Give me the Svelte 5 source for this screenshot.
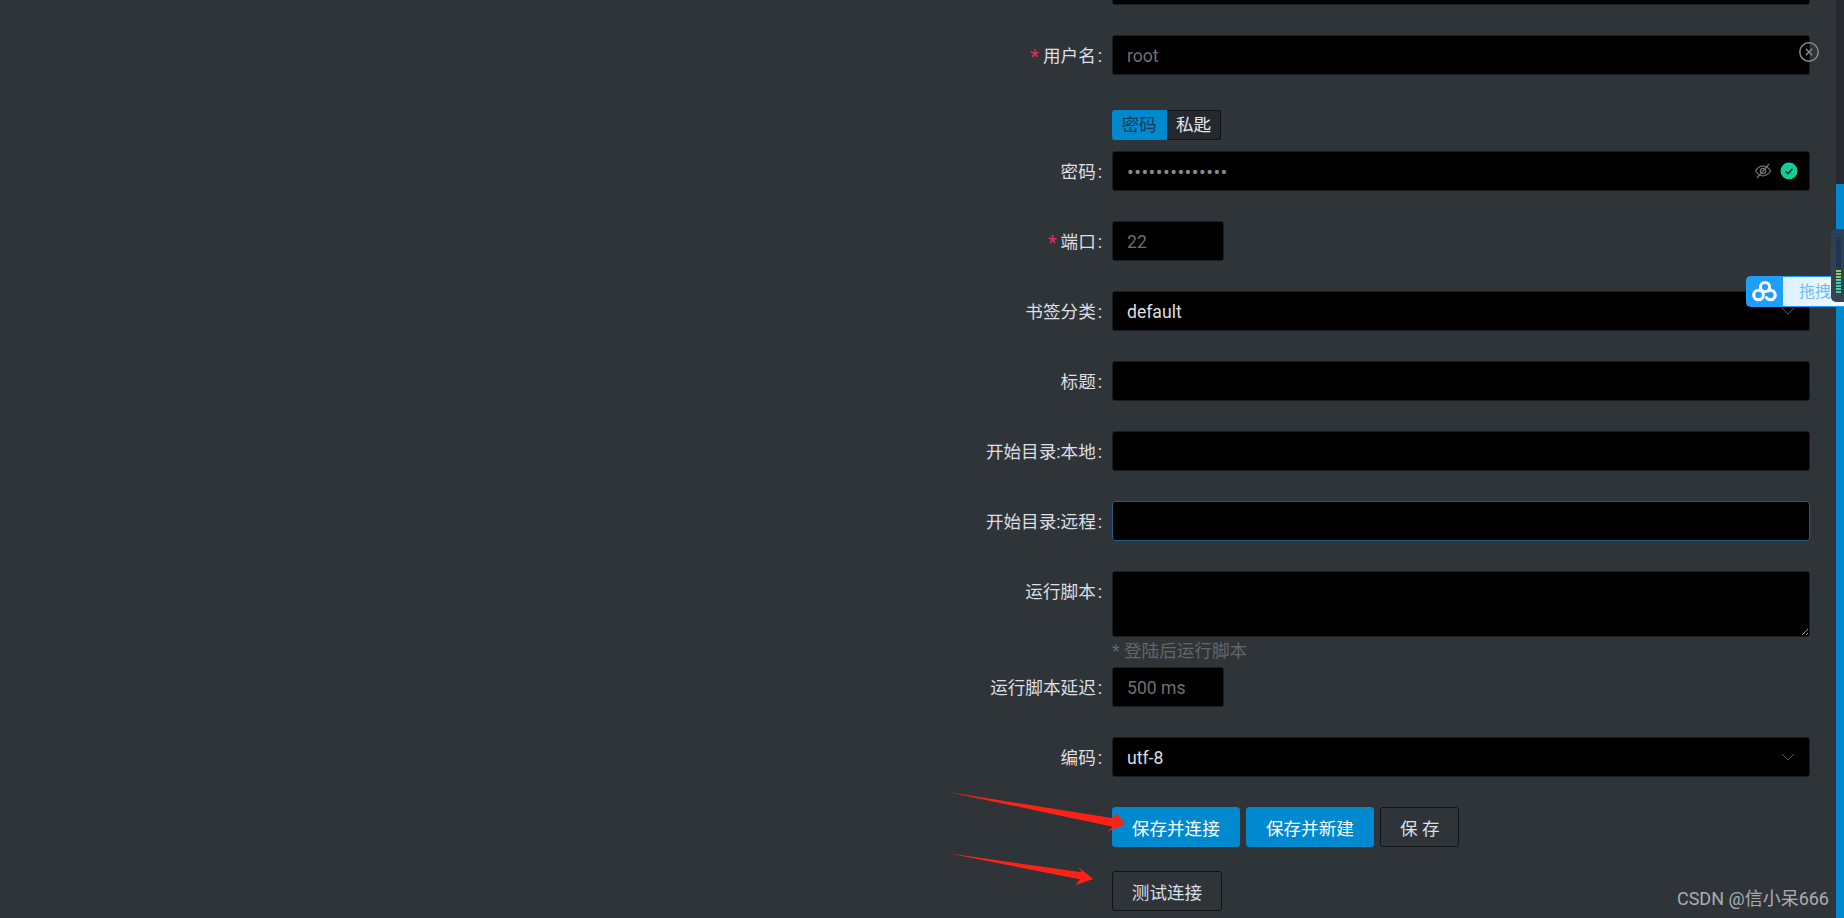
<script>
  let username = $state("");
  let title = $state("");
  let localDir = $state("");
  let remoteDir = $state("");
  let script = $state("");
  let authType = $state("password");
</script>

<div class="page">
  <main class="content">
    <form class="form">
      <div class="row">
        <span class="label"></span>
        <div class="field"><input class="input" /></div>
      </div>

      <div class="row">
        <span class="label"><i class="star">*</i>用户名<i class="colon">:</i></span>
        <div class="field">
          <input class="input" placeholder="root" bind:value={username} />
          <svg class="clear" width="22" height="22" viewBox="0 0 22 22" fill="none" stroke="#8a8a8a">
            <circle cx="11" cy="11" r="9.2" stroke-width="1.5" />
            <path d="M7.8 7.8l6.4 6.4M14.2 7.8l-6.4 6.4" stroke-width="1.5" />
          </svg>
        </div>
      </div>

      <div class="tabs">
        <button type="button" class="tab" class:on={authType === "password"} onclick={() => (authType = "password")}>密码</button>
        <button type="button" class="tab" class:on={authType === "key"} onclick={() => (authType = "key")}>私匙</button>
      </div>

      <div class="row">
        <span class="label">密码<i class="colon">:</i></span>
        <div class="field">
          <input class="input pass" type="password" value="12345678901234" />
          <div class="suffix">
            <svg width="18" height="16" viewBox="0 0 18 16" fill="none" stroke="#707070" stroke-width="1.3">
              <path d="M1.5 8C3.5 4.8 6 3.2 9 3.2s5.500 1.600 7.500 4.800C14.500 11.200 12 12.800 9 12.800S3.500 11.200 1.500 8z" />
              <circle cx="9" cy="8" r="2.600" />
              <path d="M3 15L15 1" />
            </svg>
            <svg width="18" height="18" viewBox="0 0 18 18">
              <circle cx="9" cy="9" r="8.500" fill="#13ce9c" />
              <path d="M5.500 9.200l2.500 2.500 4.500-5" fill="none" stroke="#08251d" stroke-width="1.600" />
            </svg>
          </div>
        </div>
      </div>

      <div class="row">
        <span class="label"><i class="star">*</i>端口<i class="colon">:</i></span>
        <div class="field short"><input class="input" placeholder="22" /></div>
      </div>

      <div class="row">
        <span class="label">书签分类<i class="colon">:</i></span>
        <div class="field">
          <input class="input light" readonly value="default" />
          <svg class="chevron" width="14" height="8" viewBox="0 0 14 8" fill="none" stroke="#555"><path d="M1 1l6 6 6-6" /></svg>
        </div>
      </div>

      <div class="row">
        <span class="label">标题<i class="colon">:</i></span>
        <div class="field"><input class="input light" bind:value={title} /></div>
      </div>

      <div class="row">
        <span class="label">开始目录:本地<i class="colon">:</i></span>
        <div class="field"><input class="input light" bind:value={localDir} /></div>
      </div>

      <div class="row">
        <span class="label">开始目录:远程<i class="colon">:</i></span>
        <div class="field"><input class="input light focus" bind:value={remoteDir} /></div>
      </div>

      <div class="row flush">
        <span class="label">运行脚本<i class="colon">:</i></span>
        <div class="field"><textarea class="input area" bind:value={script}></textarea></div>
      </div>
      <p class="hint">* 登陆后运行脚本</p>

      <div class="row">
        <span class="label">运行脚本延迟<i class="colon">:</i></span>
        <div class="field short"><input class="input" placeholder="500 ms" /></div>
      </div>

      <div class="row">
        <span class="label">编码<i class="colon">:</i></span>
        <div class="field">
          <input class="input light" readonly value="utf-8" />
          <svg class="chevron" width="14" height="8" viewBox="0 0 14 8" fill="none" stroke="#555"><path d="M1 1l6 6 6-6" /></svg>
        </div>
      </div>

      <div class="actions">
        <button type="button" class="btn primary">保存并连接</button>
        <button type="button" class="btn primary">保存并新建</button>
        <button type="button" class="btn">保 存</button>
      </div>
      <div class="actions">
        <button type="button" class="btn">测试连接</button>
      </div>
    </form>
  </main>

  <div class="scrollbar"><div class="thumb"></div></div>

  <!-- screenshot annotations and desktop widgets sitting over the page -->
  <svg class="arrows" width="1844" height="918" viewBox="0 0 1844 918">
    <polygon fill="#ff2116" points="948,792 1113.300,818.300 1116.700,813.300 1125,824.300 1107.300,831.700 1112.700,826.700" />
    <polygon fill="#ff2116" points="948,853.300 1081.700,872.300 1078.300,867.300 1093.300,879 1075,885.300 1080,879.300" />
  </svg>

  <div class="baidu">
    <div class="baidu-logo">
      <svg width="28" height="24" viewBox="0 0 28 24" fill="none" stroke="#fff" stroke-width="3">
        <circle cx="14" cy="7" r="4.600" />
        <circle cx="7.500" cy="15" r="4.800" />
        <path d="M14.500 16.500c1.500 2.500 3 3.300 5 3.300a4.800 4.800 0 1 0-3.500-8.100" />
      </svg>
    </div>
    <div class="baidu-text">拖拽</div>
  </div>

  <div class="meter"><div class="meter-bars"></div></div>

  <div class="watermark">CSDN @信小呆666</div>
</div>

<style>
  :global(body) {
    margin: 0;
    background: #2f3439;
    font-family: Roboto, "Noto Sans CJK SC", sans-serif;
  }
  .page {
    position: relative;
    display: flex;
    height: 918px;
    overflow: hidden;
    background: #2f3439;
  }
  .content {
    flex: 1;
    display: flex;
    justify-content: flex-end;
  }
  .form {
    width: 908px;
    margin: -35px 26px 0 0;
  }
  .row {
    display: flex;
    margin-bottom: 30px;
  }
  .row.flush {
    margin-bottom: 0;
  }
  .label {
    width: 210px;
    height: 40px;
    box-sizing: border-box;
    padding-right: 10px;
    text-align: right;
    font-size: 17.6px;
    line-height: 42px;
    color: #dcdfe3;
  }
  .colon {
    font-style: normal;
    margin-left: 2px;
  }
  .star {
    font-style: normal;
    font-size: 20px;
    line-height: 0;
    vertical-align: -2px;
    color: #d6335c;
    margin-right: 4px;
  }
  .field {
    position: relative;
    flex: 1;
    display: flex;
    min-width: 0;
  }
  .field.short {
    flex: 0 0 112px;
  }
  .input {
    width: 100%;
    height: 40px;
    box-sizing: border-box;
    padding: 1px 14px 0;
    background: #000;
    border: 1px solid #1b1e21;
    border-radius: 3px;
    outline: none;
    font: inherit;
    font-size: 17.6px;
    color: #dcdfe3;
  }
  .input::placeholder {
    color: #6f6f6f;
    opacity: 1;
  }
  .input.focus {
    border-color: #1a5f87;
  }
  .input.pass {
    color: #8a8a8a;
    font-size: 20px;
    letter-spacing: 0.45px;
  }
  .area {
    height: 66px;
    padding: 5px 14px;
    resize: vertical;
    display: block;
  }
  .clear {
    position: absolute;
    top: 6px;
    right: -10px;
  }
  .suffix {
    position: absolute;
    top: 0;
    right: 12px;
    height: 40px;
    display: flex;
    align-items: center;
    gap: 8px;
  }
  .chevron {
    position: absolute;
    top: 16px;
    right: 15px;
  }
  .tabs {
    display: flex;
    height: 30px;
    padding-top: 5px;
    margin: 0 0 11px 210px;
  }
  .tab {
    box-sizing: border-box;
    width: 54px;
    padding: 0;
    font: inherit;
    font-size: 17.6px;
    line-height: 28px;
    color: #e4e6e9;
    background: #25282d;
    border: 1px solid #101215;
    border-left: 0;
    border-radius: 0 3px 3px 0;
  }
  .tab.on {
    width: 55px;
    color: #0c3c56;
    background: #0089cf;
    border-color: #0089cf;
    border-radius: 3px 0 0 3px;
  }
  .hint {
    margin: 0;
    height: 30px;
    padding-left: 210px;
    font-size: 17.6px;
    line-height: 28px;
    color: #666;
  }
  .actions {
    display: flex;
    gap: 6.500px;
    margin: 0 0 24px 210px;
  }
  .btn {
    height: 40px;
    box-sizing: border-box;
    padding: 0 18.800px;
    font: inherit;
    font-size: 17.6px;
    color: #dcdfe3;
    background: transparent;
    border: 1px solid #101215;
    border-radius: 3px;
  }
  .btn.primary {
    color: #fff;
    background: #0089cf;
    border-color: #0089cf;
  }
  .scrollbar {
    flex: 0 0 8px;
    background: #27292e;
  }
  .thumb {
    height: 734px;
    margin-top: 184px;
    background: #0089cf;
  }
  .arrows {
    position: absolute;
    top: 0;
    left: 0;
    pointer-events: none;
  }
  .baidu {
    position: absolute;
    top: 276px;
    right: 0;
    left: 1746px;
    height: 31px;
    display: flex;
    box-sizing: border-box;
    border: 1px solid #1e9fff;
    border-right: 0;
    border-radius: 5px 0 0 5px;
    background: linear-gradient(90deg, #d3ecff, #f2faff);
  }
  .baidu-logo {
    flex: 0 0 36px;
    display: flex;
    align-items: center;
    justify-content: center;
    background: #1e9fff;
  }
  .baidu-text {
    padding-left: 16px;
    font-size: 16px;
    line-height: 29px;
    color: #6dbdf6;
    white-space: nowrap;
  }
  .meter {
    position: absolute;
    top: 229px;
    right: 0;
    width: 13px;
    height: 73px;
    box-sizing: border-box;
    padding: 8px 3px 8px 5px;
    background: linear-gradient(180deg, #2b3f58, #39424f);
    border-radius: 5px 0 0 5px;
  }
  .meter-bars {
    height: 100%;
    background:
      repeating-linear-gradient(180deg, transparent 0 2px, #2a3a50 2px 3px),
      linear-gradient(180deg, #1c3552 0 58%, #8fce5c 58% 75%, #42d0a0 75% 100%);
  }
  .watermark {
    position: absolute;
    top: 888px;
    right: 15px;
    font-size: 18px;
    line-height: 22px;
    color: rgba(255, 255, 255, 0.6);
    white-space: nowrap;
  }
</style>
